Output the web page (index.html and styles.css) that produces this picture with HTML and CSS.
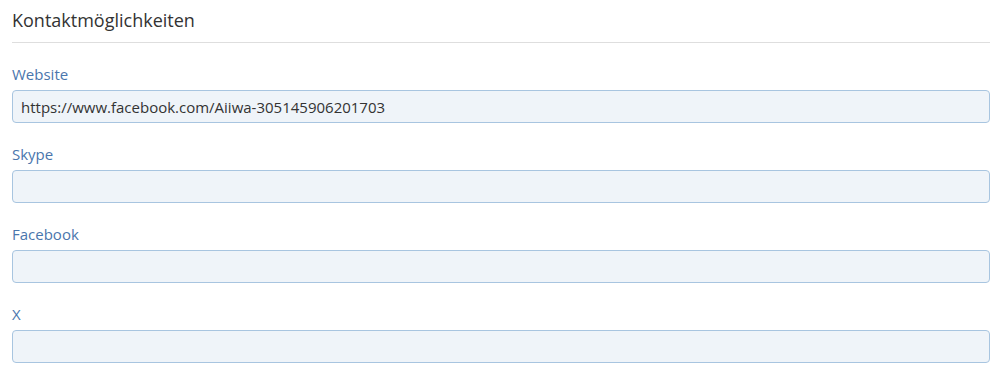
FILE: index.html
```html
<!DOCTYPE html>
<html lang="de">
<head>
<meta charset="utf-8">
<link rel="stylesheet" href="styles.css">
</head>
<body>
<div class="panel">
  <h2 class="title">Kontaktmöglichkeiten</h2>
  <div class="field">
    <label class="label">Website</label>
    <input class="input" type="text" value="https://www.facebook.com/Aiiwa-305145906201703">
  </div>
  <div class="field">
    <label class="label">Skype</label>
    <input class="input" type="text" value="">
  </div>
  <div class="field">
    <label class="label">Facebook</label>
    <input class="input" type="text" value="">
  </div>
  <div class="field">
    <label class="label">X</label>
    <input class="input" type="text" value="">
  </div>
</div>
</body>
</html>
```

FILE: styles.css
```css
html, body {
  margin: 0;
  padding: 0;
  background: #fff;
}
body {
  font-family: "Open Sans", "Liberation Sans", sans-serif;
  color: #333;
}
.panel {
  padding: 0 15px 0 12px;
}
.title {
  margin: 0;
  font-size: 18px;
  font-weight: 400;
  line-height: 24px;
  padding: 8px 0 10px;
  border-bottom: 1px solid #dedede;
  color: #333;
}
.field {
  display: flex;
  flex-direction: column;
  margin-top: 21px;
}
.field + .field {
  margin-top: 21px;
}
.label {
  font-size: 15px;
  line-height: 20px;
  color: #4a76ad;
  margin-bottom: 6px;
}
.input {
  box-sizing: border-box;
  height: 33px;
  width: 100%;
  margin: 0;
  padding: 0 8px;
  font-family: "Open Sans", "Liberation Sans", sans-serif;
  font-size: 15px;
  color: #333;
  background: #eff4f9;
  border: 1px solid #a8c5e0;
  border-radius: 4px;
  outline: none;
}
```
